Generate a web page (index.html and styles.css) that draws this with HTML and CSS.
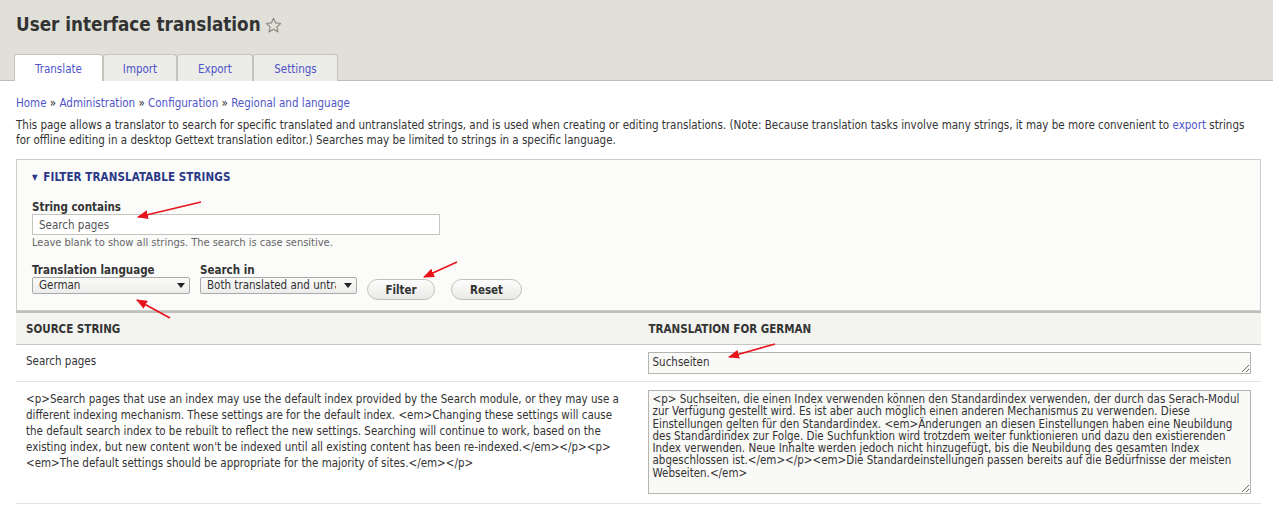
FILE: index.html
```html
<!DOCTYPE html>
<html lang="en">
<head>
<meta charset="utf-8">
<title>User interface translation</title>
<link rel="stylesheet" href="styles.css">
</head>
<body>
<div class="page">
  <header class="branding">
    <h1 class="page-title">User interface translation <span class="shortcut" aria-hidden="true"><svg width="17" height="17" viewBox="0 0 16 16"><path d="M8 1.2l2 4.4 4.7.5-3.5 3.2 1 4.7L8 11.6 3.8 14l1-4.7L1.3 6.1 6 5.6z" fill="none" stroke="#8a8a80" stroke-width="1.1" stroke-linejoin="round"/></svg></span></h1>
    <nav class="tabs">
      <a class="tab active" href="#">Translate</a>
      <a class="tab" href="#">Import</a>
      <a class="tab" href="#">Export</a>
      <a class="tab" href="#">Settings</a>
    </nav>
  </header>

  <main class="content">
    <div class="breadcrumb"><a href="#">Home</a> » <a href="#">Administration</a> » <a href="#">Configuration</a> » <a href="#">Regional and language</a></div>
    <p class="help">This page allows a translator to search for specific translated and untranslated strings, and is used when creating or editing translations. (Note: Because translation tasks involve many strings, it may be more convenient to <a href="#">export</a> strings for offline editing in a desktop Gettext translation editor.) Searches may be limited to strings in a specific language.</p>

    <fieldset class="filter">
      <legend class="filter-legend"><span class="caret">▼</span> Filter translatable strings</legend>
      <div class="form-item">
        <label class="form-label" for="string">String contains</label>
        <input class="text-input" id="string" type="text" value="Search pages">
        <div class="description">Leave blank to show all strings. The search is case sensitive.</div>
      </div>
      <div class="filter-row">
        <div class="form-item inline">
          <label class="form-label" for="langcode">Translation language</label>
          <span class="select-wrap lang"><select id="langcode"><option>German</option></select></span>
        </div>
        <div class="form-item inline">
          <label class="form-label" for="searchin">Search in</label>
          <span class="select-wrap search"><select id="searchin"><option>Both translated and untranslated strings</option></select></span>
        </div>
        <div class="actions">
          <button class="button filter-btn" type="button">Filter</button>
          <button class="button reset-btn" type="button">Reset</button>
        </div>
      </div>
    </fieldset>

    <table class="strings">
      <thead>
        <tr><th>Source string</th><th>Translation for German</th></tr>
      </thead>
      <tbody>
        <tr class="short-row">
          <td>Search pages</td>
          <td><textarea class="translation single" rows="1">Suchseiten</textarea></td>
        </tr>
        <tr>
          <td class="source">&lt;p&gt;Search pages that use an index may use the default index provided by the Search module, or they may use a different indexing mechanism. These settings are for the default index. &lt;em&gt;Changing these settings will cause the default search index to be rebuilt to reflect the new settings. Searching will continue to work, based on the existing index, but new content won't be indexed until all existing content has been re-indexed.&lt;/em&gt;&lt;/p&gt;&lt;p&gt;&lt;em&gt;The default settings should be appropriate for the majority of sites.&lt;/em&gt;&lt;/p&gt;</td>
          <td><textarea class="translation multi" rows="7">&lt;p&gt; Suchseiten, die einen Index verwenden können den Standardindex verwenden, der durch das Serach-Modul zur Verfügung gestellt wird. Es ist aber auch möglich einen anderen Mechanismus zu verwenden. Diese Einstellungen gelten für den Standardindex. &lt;em&gt;Änderungen an diesen Einstellungen haben eine Neubildung des Standardindex zur Folge. Die Suchfunktion wird trotzdem weiter funktionieren und dazu den existierenden Index verwenden. Neue Inhalte werden jedoch nicht hinzugefügt, bis die Neubildung des gesamten Index abgeschlossen ist.&lt;/em&gt;&lt;/p&gt;&lt;em&gt;Die Standardeinstellungen passen bereits auf die Bedürfnisse der meisten Webseiten.&lt;/em&gt;</textarea></td>
        </tr>
      </tbody>
    </table>
  </main>

  <!-- hand-drawn callout arrows laid over the form -->
  <svg class="callouts" width="1273" height="507" viewBox="0 0 1273 507" aria-hidden="true">
    <defs>
      <marker id="head" markerWidth="11" markerHeight="9" refX="10" refY="4.5" orient="auto" markerUnits="userSpaceOnUse">
        <path d="M0 0L11 4.5L0 9z" fill="#e8141c"/>
      </marker>
    </defs>
    <g stroke="#e8141c" stroke-width="1.7" fill="none" marker-end="url(#head)">
      <line x1="201" y1="202" x2="138" y2="217"/>
      <line x1="457" y1="262" x2="424" y2="277"/>
      <line x1="170" y1="318" x2="137" y2="300"/>
      <line x1="775" y1="344" x2="729" y2="357"/>
    </g>
  </svg>
</div>
</body>
</html>
```

FILE: styles.css
```css
* { box-sizing: border-box; }

html, body {
  margin: 0;
  background: #fff;
}

body {
  font-family: "DejaVu Sans Condensed", "DejaVu Sans", sans-serif;
  font-size: 11.5px;
  color: #333;
}

a {
  color: #4f55c9;
  text-decoration: none;
}

.page {
  position: relative;
  width: 1273px;
  min-height: 507px;
  overflow: hidden;
}

/* ---- grey branding bar with title and primary tabs ---- */
.branding {
  background: #e0e0d8;
  border-bottom: 1px solid #bdbdb5;
  padding: 13px 0 0 14px;
}

.page-title {
  margin: 0 0 0 2px;
  font-size: 18.7px;
  font-weight: bold;
  line-height: 24px;
  color: #333;
  display: flex;
  align-items: center;
  gap: 4px;
}

.shortcut {
  display: inline-flex;
  margin-top: 1px;
}

.tabs {
  display: flex;
  margin-top: 17px;
}

.tab {
  display: block;
  height: 27px;
  line-height: 28px;
  text-align: center;
  background: #ecece8;
  border: 1px solid #c4c4bc;
  border-bottom: 0;
  border-radius: 3px 3px 0 0;
  font-size: 11.5px;
  margin-bottom: -1px;
}

.tab:nth-child(1) { width: 89px; }
.tab:nth-child(2) { width: 74px; }
.tab:nth-child(3) { width: 76px; }
.tab:nth-child(4) { width: 85px; }

.tab.active {
  background: #fff;
}

/* ---- main region ---- */
.content {
  padding: 15px 12px 0 16px;
}

.breadcrumb {
  line-height: 15px;
}

.help {
  margin: 7px 0 11px;
  line-height: 15px;
}

/* ---- filter fieldset ---- */
.filter {
  margin: 0;
  padding: 41px 15px 10px;
  border: 1px solid #ccc;
  background: #fbfbfa;
  position: relative;
  min-width: 0;
}

.filter-legend {
  position: absolute;
  top: 10px;
  left: 15px;
  padding: 0;
  font-size: 11.5px;
  font-weight: bold;
  text-transform: uppercase;
  letter-spacing: 0.1px;
  color: #2a3886;
}

.caret {
  font-size: 8px;
  vertical-align: 1px;
  margin-right: 2px;
}

.form-label {
  display: block;
  font-weight: bold;
  line-height: 13px;
  margin-bottom: 0;
}

.text-input {
  display: block;
  width: 408px;
  height: 21px;
  padding: 0 6px;
  border: 1px solid #c4c4c0;
  background: #fff;
  font: inherit;
  font-size: 11.5px;
  color: #555;
}

.description {
  color: #666;
  font-size: 11px;
  line-height: 14px;
  margin-top: 1px;
}

.filter-row {
  display: flex;
  align-items: flex-start;
  margin-top: 14px;
}

.form-item.inline {
  margin-right: 10px;
}

.select-wrap {
  position: relative;
  display: block;
}

.select-wrap select {
  appearance: none;
  -webkit-appearance: none;
  display: block;
  height: 17px;
  padding: 0 20px 0 6px;
  border: 1px solid #aaa;
  border-radius: 2px;
  background: linear-gradient(#fafaf8, #ececea);
  font: inherit;
  font-size: 11.5px;
  line-height: 15px;
  color: #333;
}

.select-wrap.lang select { width: 158px; }
.select-wrap.search select { width: 157px; }

.select-wrap::after {
  content: "";
  position: absolute;
  right: 5px;
  top: 6px;
  border-left: 4px solid transparent;
  border-right: 4px solid transparent;
  border-top: 5px solid #222;
  pointer-events: none;
}

.actions {
  display: flex;
  gap: 16px;
  margin-top: 15px;
}

.button {
  height: 21px;
  padding: 0;
  border: 1px solid #c0c0bb;
  border-radius: 12px;
  background: linear-gradient(#fdfdfd, #e9e9e6);
  font: inherit;
  font-size: 11.5px;
  font-weight: bold;
  color: #333;
}

.filter-btn { width: 68px; }
.reset-btn { width: 71px; }

/* ---- strings table ---- */
.strings {
  width: 100%;
  border-collapse: collapse;
  table-layout: fixed;
  margin-top: -1px;
}

.strings th {
  text-align: left;
  background: #f3f3f0;
  border-top: 3px solid #bebfb9;
  border-bottom: 1px solid #c6c6c1;
  height: 33px;
  padding: 0 10px;
  font-size: 11.5px;
  font-weight: bold;
  text-transform: uppercase;
  color: #333;
}

.strings td {
  vertical-align: top;
  padding: 8px 10px 8px 9px;
  border-bottom: 1px solid #e4e4df;
  line-height: 16px;
}

.strings td:first-child {
  padding-left: 10px;
  padding-right: 14px;
}

.strings .short-row td:last-child {
  padding-top: 7px;
  padding-bottom: 7px;
}

.strings td.source {
  padding-top: 9px;
}

.strings tbody tr:last-child td:last-child {
  padding-top: 8px;
  padding-bottom: 9px;
}

.translation {
  display: block;
  width: 100%;
  border: 1px solid #b4b4b0;
  background: #f9f9f7;
  font: inherit;
  font-size: 11.5px;
  line-height: 12.3px;
  color: #333;
  padding: 3px 4px;
  resize: vertical;
}

.translation.single {
  height: 22px;
  padding-top: 3px;
}

.translation.multi {
  height: 104px;
  padding-top: 2px;
}

/* ---- callout arrows ---- */
.callouts {
  position: absolute;
  top: 0;
  left: 0;
  pointer-events: none;
}
```
